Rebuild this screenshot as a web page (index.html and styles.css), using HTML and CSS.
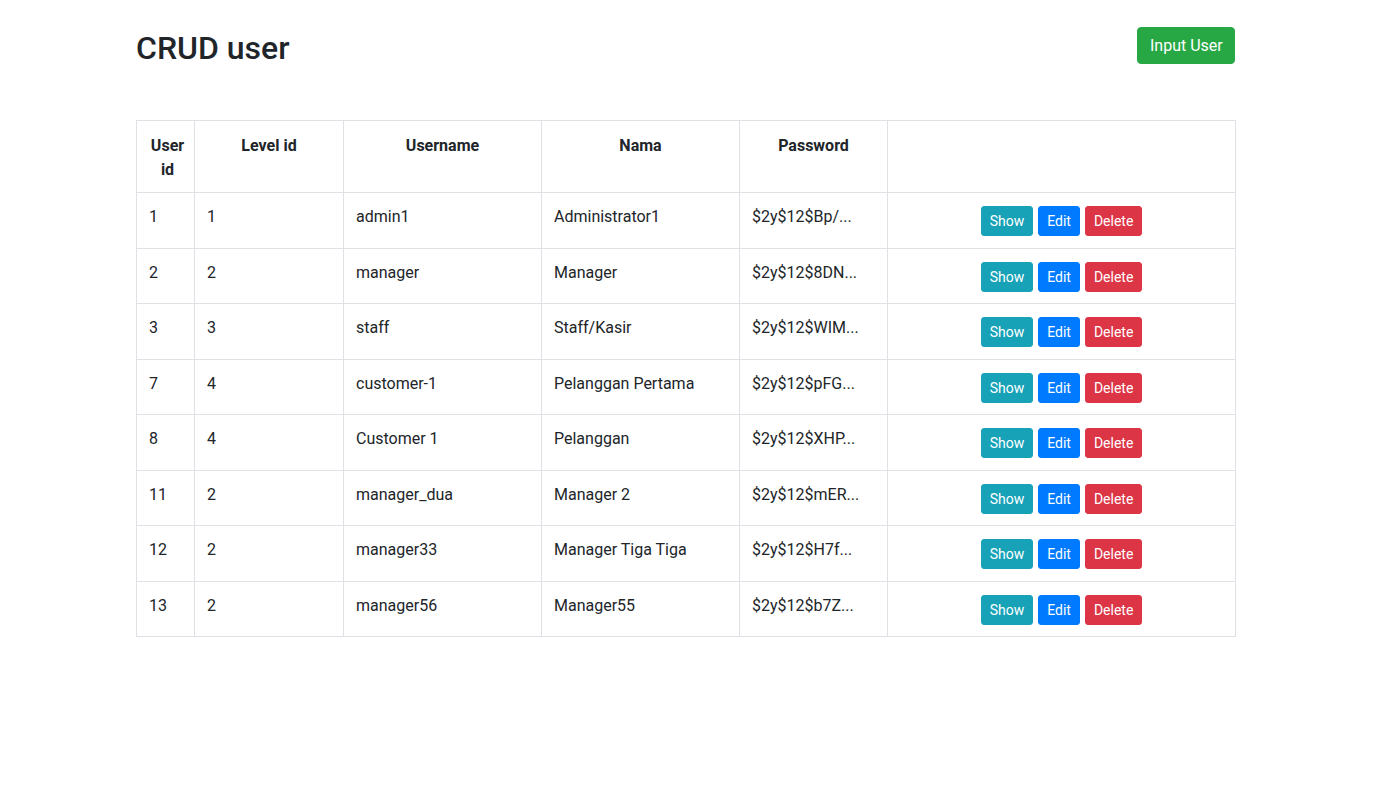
FILE: index.html
```html
<!DOCTYPE html>
<html lang="id">
<head>
<meta charset="utf-8">
<title>CRUD user</title>
<link rel="stylesheet" href="styles.css">
</head>
<body>
<div class="page">
  <div class="topbar">
    <h2 class="title">CRUD user</h2>
    <a class="btn btn-success btn-input" href="#">Input User</a>
  </div>
  <table class="table">
    <colgroup>
      <col class="c-id">
      <col class="c-level">
      <col class="c-user">
      <col class="c-nama">
      <col class="c-pass">
      <col class="c-act">
    </colgroup>
    <thead>
      <tr>
        <th>User id</th>
        <th>Level id</th>
        <th>Username</th>
        <th>Nama</th>
        <th>Password</th>
        <th></th>
      </tr>
    </thead>
    <tbody>
      <tr><td>1</td><td>1</td><td>admin1</td><td>Administrator1</td><td>$2y$12$Bp/...</td><td class="act"><div class="btns"><a class="btn btn-sm btn-info" href="#">Show</a><a class="btn btn-sm btn-primary" href="#">Edit</a><a class="btn btn-sm btn-danger" href="#">Delete</a></div></td></tr>
      <tr><td>2</td><td>2</td><td>manager</td><td>Manager</td><td>$2y$12$8DN...</td><td class="act"><div class="btns"><a class="btn btn-sm btn-info" href="#">Show</a><a class="btn btn-sm btn-primary" href="#">Edit</a><a class="btn btn-sm btn-danger" href="#">Delete</a></div></td></tr>
      <tr><td>3</td><td>3</td><td>staff</td><td>Staff/Kasir</td><td>$2y$12$WIM...</td><td class="act"><div class="btns"><a class="btn btn-sm btn-info" href="#">Show</a><a class="btn btn-sm btn-primary" href="#">Edit</a><a class="btn btn-sm btn-danger" href="#">Delete</a></div></td></tr>
      <tr><td>7</td><td>4</td><td>customer-1</td><td>Pelanggan Pertama</td><td>$2y$12$pFG...</td><td class="act"><div class="btns"><a class="btn btn-sm btn-info" href="#">Show</a><a class="btn btn-sm btn-primary" href="#">Edit</a><a class="btn btn-sm btn-danger" href="#">Delete</a></div></td></tr>
      <tr><td>8</td><td>4</td><td>Customer 1</td><td>Pelanggan</td><td>$2y$12$XHP...</td><td class="act"><div class="btns"><a class="btn btn-sm btn-info" href="#">Show</a><a class="btn btn-sm btn-primary" href="#">Edit</a><a class="btn btn-sm btn-danger" href="#">Delete</a></div></td></tr>
      <tr><td>11</td><td>2</td><td>manager_dua</td><td>Manager 2</td><td>$2y$12$mER...</td><td class="act"><div class="btns"><a class="btn btn-sm btn-info" href="#">Show</a><a class="btn btn-sm btn-primary" href="#">Edit</a><a class="btn btn-sm btn-danger" href="#">Delete</a></div></td></tr>
      <tr><td>12</td><td>2</td><td>manager33</td><td>Manager Tiga Tiga</td><td>$2y$12$H7f...</td><td class="act"><div class="btns"><a class="btn btn-sm btn-info" href="#">Show</a><a class="btn btn-sm btn-primary" href="#">Edit</a><a class="btn btn-sm btn-danger" href="#">Delete</a></div></td></tr>
      <tr><td>13</td><td>2</td><td>manager56</td><td>Manager55</td><td>$2y$12$b7Z...</td><td class="act"><div class="btns"><a class="btn btn-sm btn-info" href="#">Show</a><a class="btn btn-sm btn-primary" href="#">Edit</a><a class="btn btn-sm btn-danger" href="#">Delete</a></div></td></tr>
    </tbody>
  </table>
</div>
</body>
</html>
```

FILE: styles.css
```css
* { box-sizing: border-box; }

html, body {
  margin: 0;
  padding: 0;
  background: #fff;
}

body {
  font-family: Roboto, "Liberation Sans", Arial, sans-serif;
  font-size: 16px;
  line-height: 1.5;
  color: #212529;
}

.page {
  width: 1099px;
  margin-left: 136px;
  padding-top: 27px;
}

.topbar {
  display: flex;
  justify-content: space-between;
  align-items: flex-start;
  height: 93px;
}

.title {
  margin: 2px 0 0 0;
  font-size: 32px;
  font-weight: 500;
  line-height: 1.2;
}

.btn {
  display: inline-block;
  text-decoration: none;
  color: #fff;
  border: 1px solid transparent;
  border-radius: 4px;
  font-weight: 400;
  text-align: center;
  white-space: nowrap;
}

.btn-input {
  font-size: 16px;
  line-height: 24px;
  padding: 5.5px 12px;
  width: 98px;
}

.btn-sm {
  font-size: 14px;
  line-height: 21px;
  padding: 3.5px 8px;
  border-radius: 3px;
}

.btn-success { background: #28a745; border-color: #28a745; }
.btn-info { background: #17a2b8; border-color: #17a2b8; }
.btn-primary { background: #007bff; border-color: #007bff; }
.btn-danger { background: #dc3545; border-color: #dc3545; }

.table {
  width: 1099px;
  border-collapse: collapse;
  table-layout: fixed;
}

.c-id { width: 58px; }
.c-level { width: 149px; }
.c-user { width: 198px; }
.c-nama { width: 198px; }
.c-pass { width: 148px; }
.c-act { width: 348px; }

.table th,
.table td {
  border: 1px solid #dee2e6;
  padding: 12px;
  vertical-align: top;
}

.table th {
  font-weight: 700;
  text-align: center;
  padding-top: 13px;
  padding-bottom: 10px;
}

.table thead th:first-child {
  padding-left: 12px;
  padding-right: 8px;
}

.table td {
  text-align: left;
  height: 55px;
  padding-top: 12px;
  padding-bottom: 10px;
}

.table tbody tr:nth-child(odd) td {
  height: 56px;
}

.table td.act {
  padding-top: 13px;
}

.btns {
  display: flex;
  justify-content: center;
  gap: 5px;
}
```
